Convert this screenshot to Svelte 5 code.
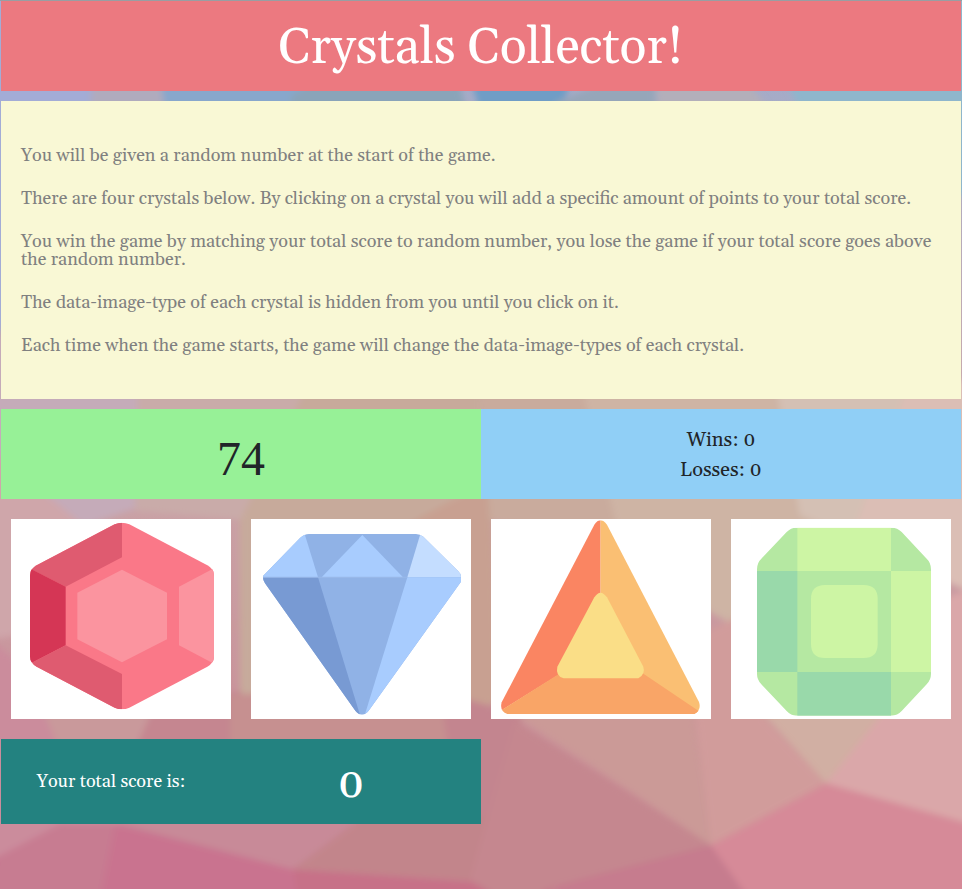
<script>
  let target = $state(74);
  let wins = $state(0);
  let losses = $state(0);
  let total = $state(0);
  let values = $state([5, 9, 2, 11]);

  const rules = [
    'You will be given a random number at the start of the game.',
    'There are four crystals below. By clicking on a crystal you will add a specific amount of points to your total score.',
    'You win the game by matching your total score to random number, you lose the game if your total score goes above the random number.',
    'The data-image-type of each crystal is hidden from you until you click on it.',
    'Each time when the game starts, the game will change the data-image-types of each crystal.'
  ];

  // Each crystal is a list of flat facets, with a rounded outline as clip.
  const crystals = [
    {
      name: 'Red crystal',
      outline: 'M344 43Q366 34 388 43L622 166Q642 177 642 196V440Q642 458 622 470L388 593Q366 602 344 593L110 470Q90 458 90 440V196Q90 177 110 166Z',
      facets: [
        ['#fa7888', 'M90 30H645V605H90Z'],
        ['#df5b70', 'M80 170L366 20V142L197 230L96 179Z'],
        ['#d53655', 'M85 173L197 230V406L85 464Z'],
        ['#df5b70', 'M95 458L197 406L366 492V610L80 470Z'],
        ['#fb949f', 'M645 173L537 230V406L645 463Z'],
        ['#fb949f', 'M366 179L501 248V388L366 457L232 388V248Z']
      ]
    },
    {
      name: 'Blue crystal',
      outline: 'M207 72H528Q540 72 550 80L655 184Q663 191 663 201V215L386 602Q366 626 346 602L75 220Q68 210 69 198L180 84Q193 72 207 72Z',
      facets: [
        ['#90b2e6', 'M60 60H670V625H60Z'],
        ['#a8ccfe', 'M194 72L234 202H60V72Z'],
        ['#789ad3', 'M60 202H234L363 625H60Z'],
        ['#a8ccfe', 'M367 75L489 202H245Z'],
        ['#c4ddff', 'M541 72L502 202H670V60Z'],
        ['#a8ccfe', 'M502 202H670V625H371Z'],
        ['#98b9e9', 'M69 200H502V203H69Z']
      ]
    },
    {
      name: 'Orange crystal',
      outline: 'M343 44Q361 18 381 44L657 576Q665 600 643 612H82Q58 604 65 577Z',
      facets: [
        ['#fabf73', 'M361 20H680V620H361Z'],
        ['#fa8562', 'M361 20V360L240 492L66 600L40 620V20Z'],
        ['#f9a567', 'M66 599L240 490H488L655 602L690 625H30Z'],
        ['#fade87', 'M343 262Q361 234 381 262L490 470Q497 492 475 505H251Q226 498 232 470Z']
      ]
    },
    {
      name: 'Green crystal',
      outline: 'M228 53H515Q532 53 545 66L620 146Q633 158 633 178V492Q633 509 620 523L545 603Q532 617 515 617H228Q213 617 200 603L124 523Q111 509 111 492V178Q111 158 124 146L200 66Q213 53 228 53Z',
      facets: [
        ['#b5e8a2', 'M100 40H650V630H100Z'],
        ['#cdf5a4', 'M232 40H513V183H232Z'],
        ['#99d9aa', 'M100 183H232V486H100Z'],
        ['#cdf5a4', 'M513 183H650V486H513Z'],
        ['#99d9aa', 'M232 486H513V630H232Z'],
        ['#cdf5a4', 'M315 225H431Q473 225 473 267V402Q473 444 431 444H315Q273 444 273 402V267Q273 225 315 225Z']
      ]
    }
  ];

  const backdrop = [
    ['#a3acd6', '-20,-20 110,-20 120,210 -20,350'],
    ['#b0abbd', '100,-20 150,-20 165,110 90,110'],
    ['#88a7cc', '145,-20 360,-20 330,250 165,110'],
    ['#8aa4b9', '290,96 350,60 460,85 500,240 330,240'],
    ['#709dc6', '440,-20 610,-20 560,110 480,110'],
    ['#96a6b9', '555,102 600,84 655,84 660,250 500,240'],
    ['#b3afba', '656,84 750,84 770,110 670,240'],
    ['#8fb6cc', '740,-20 990,-20 990,210 800,110'],
    ['#c5abb9', '-20,330 138,380 135,508 70,530 -20,440'],
    ['#cfa6aa', '-20,440 90,530 50,630 -20,640'],
    ['#c9aba9', '138,380 310,380 250,520 135,510'],
    ['#c7aa9b', '310,380 480,380 490,550 240,710 240,520'],
    ['#c8a091', '395,530 490,480 500,700 410,735'],
    ['#c9ab9d', '480,380 580,380 620,540 490,520'],
    ['#ceb4a4', '580,380 780,380 850,520 760,640 690,600 620,540'],
    ['#d4c0b4', '775,380 910,380 860,540 800,515'],
    ['#dbbeb5', '910,380 990,380 990,600 850,540'],
    ['#cb8c9c', '-20,630 40,680 130,826 -20,870'],
    ['#c9999b', '30,680 240,620 150,750 60,750'],
    ['#c58690', '150,715 240,690 270,760 130,760'],
    ['#c69090', '230,695 400,680 490,740 481,830 360,826 230,760'],
    ['#c3858f', '440,690 520,715 560,900 470,900'],
    ['#c88a98', '50,810 123,826 293,869 365,815'],
    ['#c2858b', '293,869 365,815 525,815 550,887'],
    ['#c9738f', '-20,866 60,824 123,825 205,846 293,869 550,887 550,910 -20,910'],
    ['#c77b91', '0,856 60,824 115,826 100,900 -20,900'],
    ['#c77188', '293,869 550,887 550,910 300,910'],
    ['#c5878f', '515,720 711,845 550,887 520,910 470,880'],
    ['#cb9a97', '520,718 590,680 692,700 703,780 711,845'],
    ['#d19c9b', '690,640 750,610 765,718 826,783 711,845 696,720'],
    ['#d1afa3', '760,710 890,710 826,783'],
    ['#daa7a9', '885,710 940,600 990,580 990,830 826,783'],
    ['#d68a98', '711,845 826,783 990,829 990,910 750,910'],
    ['#c67b8e', '711,845 750,900 600,910 550,887']
  ];

  function pick(i) {
    total += values[i];
    if (total === target) wins += 1;
    else if (total > target) losses += 1;
    else return;
    total = 0;
    target = 19 + Math.floor(Math.random() * 102);
    values = values.map(() => 1 + Math.floor(Math.random() * 12));
  }
</script>

<div class="page">
  <svg class="backdrop" viewBox="0 0 962 889" preserveAspectRatio="xMidYMid slice" aria-hidden="true">
    <defs>
      <filter id="soften" x="0" y="0" width="100%" height="100%">
        <feGaussianBlur stdDeviation="3" />
      </filter>
    </defs>
    <g filter="url(#soften)">
      {#each backdrop as [fill, points]}
        <polygon {fill} {points} />
      {/each}
    </g>
  </svg>

  <main>
    <header><h1>Crystals Collector!</h1></header>

    <section class="rules">
      {#each rules as rule}
        <p>{rule}</p>
      {/each}
    </section>

    <section class="board">
      <div class="target">{target}</div>
      <div class="tally">
        <div>Wins: {wins}</div>
        <div>Losses: {losses}</div>
      </div>
    </section>

    <section class="crystals">
      {#each crystals as crystal, i}
        <button type="button" aria-label={crystal.name} onclick={() => pick(i)}>
          <svg viewBox="33 27 660 600" aria-hidden="true">
            <clipPath id="outline-{i}"><path d={crystal.outline} /></clipPath>
            <g clip-path="url(#outline-{i})">
              {#each crystal.facets as [fill, d]}
                <path {fill} {d} />
              {/each}
            </g>
          </svg>
        </button>
      {/each}
    </section>

    <section class="score">
      <span class="label">Your total score is:</span>
      <span class="total">{total}</span>
    </section>
  </main>
</div>

<style>
  :global(body) {
    margin: 0;
  }

  .page {
    position: relative;
    box-sizing: border-box;
    min-height: 100vh;
    overflow: hidden;
    border-top: 1px solid #999ea3;
    background: linear-gradient(#9bacd0, #c9a9ab 45%, #c98f98 85%, #c8788f);
    color: #212529;
    font-family: Gelasio, 'Liberation Serif', serif;
  }

  .backdrop {
    position: absolute;
    inset: 0;
    width: 100%;
    height: 100%;
  }

  main {
    position: relative;
    display: flex;
    flex-direction: column;
    padding: 0 1px;
  }

  header {
    padding: 6px 0 0;
    background: #ec7980;
    color: #fff;
    text-align: center;
  }

  h1 {
    margin: 0;
    font-size: 50px;
    font-weight: 400;
    line-height: 84px;
  }

  .rules {
    margin: 10px 0;
    padding: 21px 20px 19px;
    background: #f9f8d5;
    color: #808080;
    font-size: 18px;
    line-height: 18px;
  }

  .rules p {
    margin: 25px 0;
  }

  .board {
    display: grid;
    grid-template-columns: 1fr 1fr;
    text-align: center;
  }

  .target {
    background: #97f197;
    font-family: 'Liberation Serif', serif;
    font-size: 48px;
    line-height: 100px;
    height: 90px;
  }

  .tally {
    padding: 16px 0 14px;
    background: #90cff6;
    font-size: 20px;
    line-height: 30px;
  }

  .crystals {
    display: grid;
    grid-template-columns: repeat(4, 1fr);
    gap: 20px;
    padding: 20px 10px;
  }

  button {
    padding: 0;
    border: 0;
    background: #fff;
    cursor: pointer;
  }

  button svg {
    display: block;
    width: 100%;
    height: 200px;
  }

  .score {
    display: grid;
    grid-template-columns: 220px 1fr;
    align-items: center;
    width: 50%;
    height: 85px;
    background: #238280;
    color: #fff;
    text-align: center;
  }

  .label {
    font-size: 18px;
  }

  .total {
    padding-top: 6px;
    font-size: 42px;
    font-weight: 500;
  }
</style>
